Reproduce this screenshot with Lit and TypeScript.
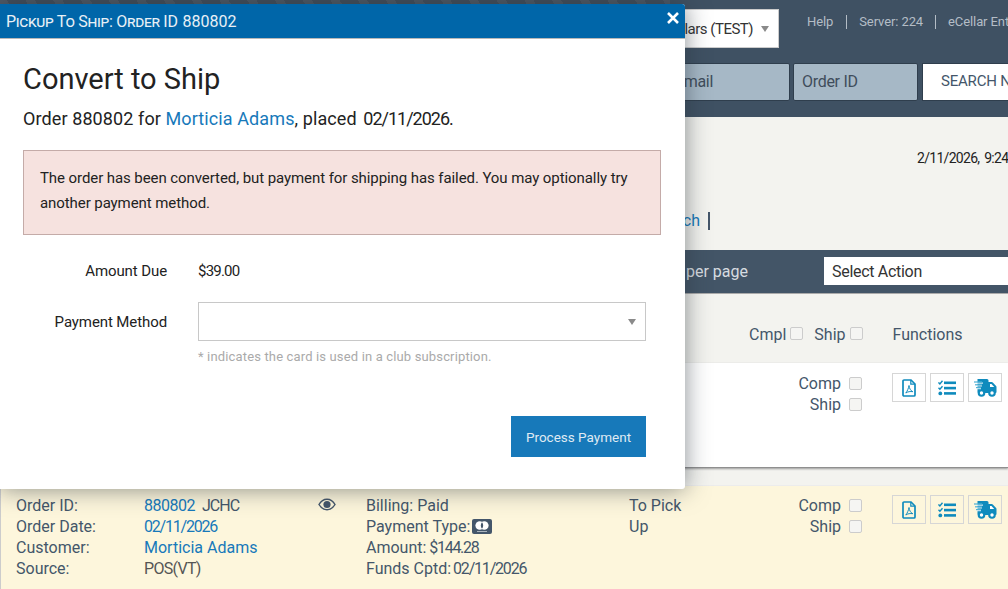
import { LitElement, html, css, svg } from "lit";
import { customElement } from "lit/decorators.js";

const pdf = svg`<svg width="14" height="18" viewBox="0 0 14 18"><path d="M2 1h7l4 4v11a1 1 0 0 1-1 1H2a1 1 0 0 1-1-1V2a1 1 0 0 1 1-1z" fill="none" stroke="#0f8bbd" stroke-width="1.700"/><path d="M8.800 1v4.200H13" fill="none" stroke="#0f8bbd" stroke-width="1.200"/><path d="M7 6.500c.4 3 1.400 5 3.800 6.200-2.500-.4-5-.1-7 1.300 1.500-2 2.700-4.500 3.200-7.500z" fill="none" stroke="#0f8bbd" stroke-width="1"/></svg>`;
const tasks = svg`<svg width="18" height="16" viewBox="0 0 18 16"><g fill="#0f8bbd"><rect x="6" y="1.500" width="12" height="2.600"/><rect x="6" y="6.800" width="12" height="2.600"/><rect x="6" y="12.100" width="12" height="2.600"/><circle cx="2.300" cy="13.400" r="1.900"/></g><path d="M.5 2.400l1.400 1.500L4.500.8M.5 7.800l1.400 1.500 2.600-3" fill="none" stroke="#0f8bbd" stroke-width="1.400"/></svg>`;
const truck = svg`<svg width="23" height="18" viewBox="0 0 23 18"><g fill="#0f8bbd"><path d="M3.500 0h9.500a1.500 1.500 0 0 1 1.500 1.500V3h3.200a1.500 1.500 0 0 1 1.100.5l3.300 3.600c.3.300.4.600.4 1V13a1 1 0 0 1-1 1H4.500a1 1 0 0 1-1-1z"/><circle cx="7.500" cy="14" r="3.800"/><circle cx="18" cy="14" r="3.800"/></g><g fill="#fff"><circle cx="7.500" cy="14" r="1.700"/><circle cx="18" cy="14" r="1.700"/><path d="M16 5h1.500l2.700 3H16z"/><rect x="3" y="3.600" width="6" height="1"/><rect x="3" y="6.400" width="5" height="1"/><rect x="3" y="9.200" width="4" height="1"/></g><g fill="#4fb0d4"><rect x="0" y="2.400" width="8" height="1.200"/><rect x="1" y="5.200" width="7" height="1.200"/><rect x="2" y="8" width="5" height="1.200"/></g></svg>`;
const eye = svg`<svg width="18" height="13" viewBox="0 0 18 13"><path d="M1 6.500C3 3 5.800 1.300 9 1.300S15 3 17 6.500C15 10 12.200 11.700 9 11.700S3 10 1 6.500z" fill="none" stroke="#44566a" stroke-width="1.500"/><circle cx="9" cy="6.500" r="3.600" fill="#44566a"/></svg>`;
const card = svg`<svg class="card" width="20" height="15" viewBox="0 0 20 15"><rect width="20" height="15" rx="2" fill="#44566a"/><circle cx="7.700" cy="6.500" r="4.300" fill="#fff"/><circle cx="12.300" cy="6.500" r="4.300" fill="#fff"/><path d="M10 3.200c1.600 2 1.600 4.600 0 6.600-1.600-2-1.600-4.600 0-6.600z" fill="#44566a"/><rect x="5" y="12" width="10" height="1" fill="#aab4bd"/></svg>`;
const close = svg`<svg width="12" height="12" viewBox="0 0 12 12"><path d="M1 1l10 10M11 1L1 11" stroke="#fff" stroke-width="2.600" fill="none"/></svg>`;

@customElement("app-root")
export class AppRoot extends LitElement {
  static styles = css`
    :host { display: block; width: 1008px; height: 589px; position: relative; overflow: hidden; background: #f3f3ef;
      font-family: Roboto, sans-serif; font-size: 16px; color: #44566a; }
    a { color: #1779ba; text-decoration: none; }
    .page { display: flex; flex-direction: column; height: 589px; }
    .top { height: 117px; flex: none; display: grid; grid-template-rows: 63px 38px; padding-left: 670px; box-sizing: border-box;
      background: repeating-linear-gradient(60deg, #4f5a66 0 8px, #434f5c 8px 24px) top left / 670px 4px no-repeat, #3f5163; }
    .r1 { display: flex; align-items: flex-start; padding-top: 9px; }
    .store { width: 109px; height: 39px; background: #fff; box-sizing: border-box; border: 1px solid #ccc; display: flex; align-items: center; justify-content: flex-end; color: #333; padding-right: 9px; gap: 8px; white-space: nowrap; font-size: 15px; letter-spacing: -.5px; }
    .tri { width: 0; height: 0; border: 4.500px solid transparent; border-top: 6px solid #8a8a8a; border-bottom: 0; }
    .links { display: flex; margin-left: 28px; margin-top: 6px; color: #b4bdc6; font-size: 13px; white-space: nowrap; }
    .links span { padding-right: 12px; margin-right: 12px; border-right: 1px solid #b4bdc6; line-height: 14px; letter-spacing: -.1px; }
    .links span:first-child { padding-right: 13px; }
    .links span:last-child { border: 0; }
    .r2 { display: flex; gap: 3px; }
    .inp { height: 38px; box-sizing: border-box; background: #a6b8c6; border: 1px solid #2f3e4d; border-radius: 2px; display: flex; align-items: center; padding: 0 0 2px 8px; color: #3f4d5b; white-space: nowrap; letter-spacing: -.3px; }
    .inp.a { width: 120px; justify-content: flex-end; padding-right: 76px; }
    .inp.b { width: 125px; }
    .search { width: 120px; flex: none; height: 38px; box-sizing: border-box; background: #fff; border: 1px solid #2f3e4d; margin-left: 1px; display: flex; align-items: center; padding: 0 0 2px 18px; color: #44566a; white-space: nowrap; overflow: hidden; font-size: 15px; letter-spacing: -.2px; }
    .info { height: 133px; flex: none; color: #222; overflow: hidden; }
    .date { padding: 33px 0 0 917px; font-size: 14px; white-space: nowrap; height: 20px; letter-spacing: -.7px; word-spacing: 2px; }
    .crumb { display: flex; justify-content: flex-end; padding-right: 298px; padding-top: 41px; gap: 8px; align-items: center; }
    .bar-sep { width: 2px; height: 18px; background: #44566a; }
    .bar { height: 44px; flex: none; background: #435567; border-bottom: 1px solid #aaa; display: grid; grid-template-columns: 138px 200px; align-items: center; color: #d7dce0; padding-left: 686px; box-sizing: border-box; white-space: nowrap; }
    .sel { height: 28px; background: #fff; color: #333; display: flex; align-items: center; padding-left: 8px; box-sizing: border-box; margin-top: -1px; letter-spacing: -.3px; }
    .head { height: 69px; flex: none; display: flex; padding-left: 749px; padding-top: 11px; box-sizing: border-box; align-items: center; }
    .cb { display: inline-block; width: 13px; height: 13px; box-sizing: border-box; border: 1px solid #ccc; border-radius: 2px; background: #f5f5f3; }
    .head .cb { margin-left: 4px; margin-top: -1px; }
    .head .s { margin-left: 11px; }
    .head .f { margin-left: 30px; }
    .row { flex: none; box-sizing: border-box; position: relative; }
    .row.w { height: 105px; background: #fff; border-bottom: 1px solid #8f8f8f; box-shadow: 0 1px 2px #999; }
    .gap { height: 17px; flex: none; }
    .row.y { flex: 1; background: #fdf6dc; border-top: 1px solid #ececec; border-left: 1px solid #ccc; display: grid; grid-template-columns: 128px 222px 263px auto; padding: 9px 0 0 15px; line-height: 21px; align-content: start; }
    .fn { display: flex; gap: 4px; position: absolute; left: 892px; top: 10px; }
    .row.y .fn { left: 891px; top: 9px; }
    .fn div { width: 34px; height: 29px; box-sizing: border-box; border: 1px solid #d6d6d6; display: flex; align-items: center; justify-content: center; }
    .chk { position: absolute; left: 760px; top: 10px; width: 102px; display: grid; grid-template-columns: 81px 13px; column-gap: 8px; justify-content: start; align-items: center; text-align: right; line-height: 21px; }
    .row.y .chk { left: 759px; top: 9px; }
    .eye { position: absolute; left: 317px; top: 12px; line-height: 0; }
    .card { vertical-align: -2px; margin-left: -2px; }
    .dt { letter-spacing: -1.200px; }
    .dt.m { margin-left: -2px; }
    .num { letter-spacing: -.5px; }
    .amt { letter-spacing: -1.300px; margin-left: -1px; }
    .code { letter-spacing: -.9px; margin-left: -1px; }
    .dim { color: #555; letter-spacing: -.7px; }
    .modal { position: absolute; left: 0; top: 4px; width: 685px; height: 485px; background: #fff; border-radius: 0 3px 3px 0; box-shadow: 0 0 24px rgba(40,50,60,.55); color: #222; }
    .mh { height: 35px; background: #0066a9; border-bottom: 1px solid #b8b8b8; box-sizing: border-box; color: #e8f0f6; font-size: 16px; display: flex; align-items: center; padding-left: 6px; position: relative; border-radius: 0 3px 0 0; }
    .sc { font-variant: small-caps; letter-spacing: -.3px; margin-right: 5px; }
    .x { position: absolute; left: 667px; top: 8px; line-height: 0; }
    .mb { padding: 20px 23px 0 23px; }
    h1 { font-weight: 400; font-size: 29px; line-height: 40px; margin: 0; }
    .sub { font-size: 18px; line-height: 24px; margin: 8px 0 0; letter-spacing: .1px; }
    .sub .d { letter-spacing: -1px; margin-left: 2px; }
    .alert { margin-top: 19px; height: 85px; width: 638px; box-sizing: border-box; background: #f6e2df; border: 1px solid #c4aba8; padding: 15px 16px; font-size: 15px; line-height: 25px; letter-spacing: -.08px; }
    .fr { display: grid; grid-template-columns: 144px 448px; column-gap: 31px; align-items: center; }
    .fr label { text-align: right; font-size: 15px; letter-spacing: -.1px; }
    .fr .v { font-size: 15px; letter-spacing: -.8px; }
    .due { margin-top: 26px; line-height: 20px; }
    .pm { margin-top: 21px; }
    .picker { height: 39px; box-sizing: border-box; border: 1px solid #c8c8c8; display: flex; align-items: center; justify-content: flex-end; padding-right: 9px; }
    .hint { margin: 8px 0 0 175px; color: #aaa; font-size: 13px; line-height: 16px; letter-spacing: .15px; }
    .act { display: flex; justify-content: flex-end; margin: 51px 16px 0 0; }
    .btn { width: 135px; height: 41px; background: #1779ba; color: #dfeaf3; font-size: 13.500px; display: flex; align-items: center; justify-content: center; }
  `;
  fn() { return html`<div class="fn"><div>${pdf}</div><div>${tasks}</div><div>${truck}</div></div>`; }
  chk() { return html`<div class="chk"><span>Comp</span><i class="cb"></i><span>Ship</span><i class="cb"></i></div>`; }
  render() {
    return html`
      <div class="page">
        <div class="top">
          <div class="r1">
            <div class="store"><span>lars (TEST)</span><i class="tri"></i></div>
            <div class="links"><span>Help</span><span>Server: 224</span><span>eCellar Enterprise</span></div>
          </div>
          <div class="r2">
            <div class="inp a">Email</div><div class="inp b">Order ID</div><div class="search">SEARCH NOW</div>
          </div>
        </div>
        <div class="info">
          <div class="date">2/11/2026, 9:24 AM</div>
          <div class="crumb"><a>Search</a><i class="bar-sep"></i></div>
        </div>
        <div class="bar"><span>per page</span><div class="sel">Select Action</div></div>
        <div class="head"><span>Cmpl</span><i class="cb"></i><span class="s">Ship</span><i class="cb"></i><span class="f">Functions</span></div>
        <div class="row w">${this.chk()}${this.fn()}</div>
        <div class="gap"></div>
        <div class="row y">
          <div>Order ID:<br>Order Date:<br>Customer:<br>Source:</div>
          <div><a class="num">880802</a>&nbsp; <span class="code">JCHC</span><br><a class="dt">02/11/2026</a><br><a>Morticia Adams</a><br><span class="dim">POS(VT)</span></div>
          <div class="eye">${eye}</div>
          <div>Billing: Paid<br>Payment Type: ${card}<br>Amount: <span class="amt">$144.28</span><br>Funds Cptd: <span class="dt m">02/11/2026</span></div>
          <div>To Pick<br>Up</div>
          ${this.chk()}${this.fn()}
        </div>
      </div>
      <div class="modal">
        <div class="mh"><span class="sc">Pickup To Ship: Order ID</span><span>880802</span><span class="x">${close}</span></div>
        <div class="mb">
          <h1>Convert to Ship</h1>
          <p class="sub">Order 880802 for <a>Morticia Adams</a>, placed <span class="d">02/11/2026</span>.</p>
          <div class="alert">The order has been converted, but payment for shipping has failed. You may optionally try another payment method.</div>
          <div class="fr due"><label>Amount Due</label><div class="v">$39.00</div></div>
          <div class="fr pm"><label>Payment Method</label><div class="picker"><i class="tri"></i></div></div>
          <div class="hint">* indicates the card is used in a club subscription.</div>
          <div class="act"><div class="btn">Process Payment</div></div>
        </div>
      </div>`;
  }
}
